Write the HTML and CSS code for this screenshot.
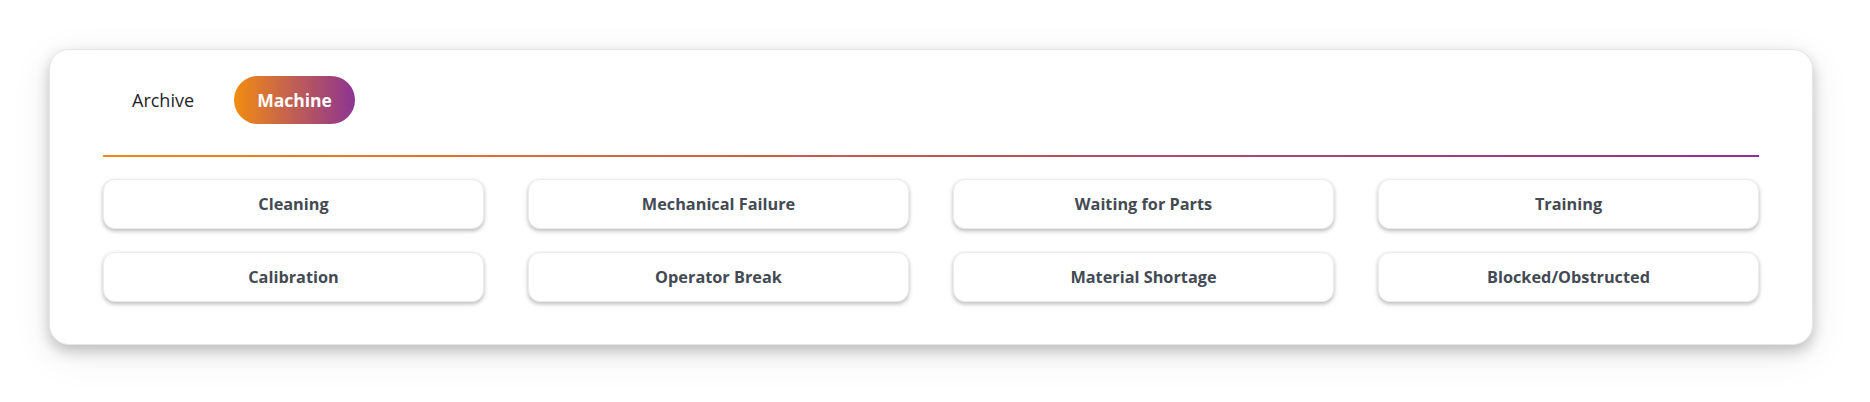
FILE: index.html
```html
<!DOCTYPE html>
<html>
<head>
<meta charset="utf-8">
<link rel="stylesheet" href="styles.css">
</head>
<body>
<div class="page">
  <div class="card">
    <div class="tabs">
      <button class="tab">Archive</button>
      <button class="tab tab-active">Machine</button>
    </div>
    <div class="divider"></div>
    <div class="grid">
      <button class="reason">Cleaning</button>
      <button class="reason">Mechanical Failure</button>
      <button class="reason">Waiting for Parts</button>
      <button class="reason">Training</button>
      <button class="reason">Calibration</button>
      <button class="reason">Operator Break</button>
      <button class="reason">Material Shortage</button>
      <button class="reason">Blocked/Obstructed</button>
    </div>
  </div>
</div>
</body>
</html>
```
FILE: styles.css
```css
html, body {
  margin: 0;
  padding: 0;
  background: #ffffff;
  font-family: "Open Sans", "Noto Sans", "Liberation Sans", sans-serif;
}
.page {
  padding: 49px 57px 56px 49px;
}
.card {
  background: #ffffff;
  border: 1px solid #e6e6e6;
  border-radius: 20px;
  box-shadow: 0 6px 14px rgba(0, 0, 0, 0.22), 0 10px 40px rgba(0, 0, 0, 0.08);
  padding: 26px 53px 42px 53px;
}
.tabs {
  display: flex;
  align-items: center;
  gap: 17px;
  padding-left: 6px;
}
.tab {
  font-family: inherit;
  border: none;
  background: transparent;
  height: 48px;
  padding: 0 23px;
  border-radius: 24px;
  font-size: 18px;
  color: #1f2329;
  cursor: pointer;
}
.tab-active {
  background: linear-gradient(90deg, #f28c10 0%, #c4624f 45%, #8d3491 100%);
  color: #ffffff;
  font-weight: 700;
  font-size: 17.5px;
  width: 121px;
  padding: 0;
}
.divider {
  height: 2px;
  margin-top: 31px;
  background: linear-gradient(90deg, #f08a12 0%, #b9535c 55%, #8e3193 100%);
}
.grid {
  display: grid;
  grid-template-columns: repeat(4, 1fr);
  column-gap: 44px;
  row-gap: 23px;
  margin-top: 22px;
}
.reason {
  font-family: inherit;
  height: 50px;
  background: #ffffff;
  border: 1px solid #ececef;
  border-radius: 12px;
  box-shadow: 0 2px 4px rgba(0, 0, 0, 0.28);
  font-size: 16.3px;
  font-weight: 700;
  color: #434a54;
  cursor: pointer;
}
```
